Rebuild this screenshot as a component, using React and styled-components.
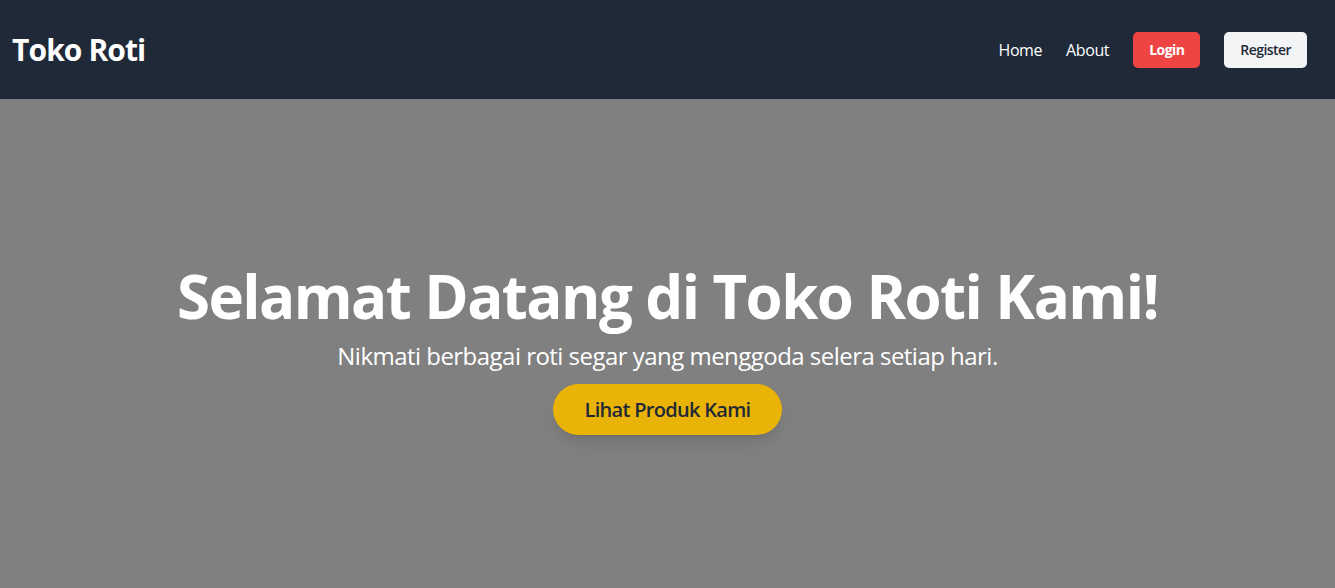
import React from 'react';
import styled, { createGlobalStyle } from 'styled-components';

const GlobalStyle = createGlobalStyle`
  * {
    box-sizing: border-box;
  }

  body {
    margin: 0;
    font-family: 'Open Sans', 'Noto Sans', sans-serif;
    letter-spacing: -0.025em;
    background: #808080;
  }
`;

const Header = styled.header`
  height: 99px;
  display: flex;
  align-items: center;
  justify-content: space-between;
  padding: 0 28px 0 12px;
  background: #1f2937;
`;

const Logo = styled.h1`
  margin: 0;
  font-size: 30px;
  line-height: 36px;
  font-weight: 700;
  letter-spacing: -0.03em;
  color: #fff;
`;

const Nav = styled.nav`
  display: flex;
  align-items: center;
  gap: 24px;
`;

const NavLink = styled.a`
  font-size: 16px;
  line-height: 24px;
  color: #fff;
  text-decoration: none;
  cursor: pointer;
`;

const NavButton = styled.button`
  height: 36px;
  padding: 0 16px;
  border: none;
  border-radius: 5px;
  font-family: inherit;
  font-size: 14px;
  line-height: 20px;
  letter-spacing: -0.04em;
  font-weight: ${(p) => (p.$primary ? 700 : 600)};
  color: ${(p) => (p.$primary ? '#fff' : '#1f2937')};
  background: ${(p) => (p.$primary ? '#ef4444' : '#f3f4f6')};
  cursor: pointer;
`;

const Hero = styled.section`
  min-height: calc(100vh - 99px);
  display: flex;
  flex-direction: column;
  align-items: center;
  padding-top: 167px;
  text-align: center;
  color: #fff;
`;

const Title = styled.h2`
  margin: 0 0 14px;
  font-size: 60px;
  line-height: 60px;
  font-weight: 700;
  letter-spacing: -0.026em;
`;

const Subtitle = styled.p`
  margin: 0 0 12px;
  font-size: 24px;
  line-height: 32px;
  letter-spacing: -0.022em;
`;

const CtaButton = styled.button`
  height: 51px;
  padding: 0 32px;
  border: none;
  border-radius: 9999px;
  font-family: inherit;
  font-size: 20px;
  font-weight: 600;
  letter-spacing: -0.035em;
  color: #1f2937;
  background: #eab308;
  box-shadow: 0 10px 15px -3px rgba(0, 0, 0, 0.1), 0 4px 6px -4px rgba(0, 0, 0, 0.1);
  cursor: pointer;
`;

export default function App() {
  return (
    <>
      <GlobalStyle />
      <Header>
        <Logo>Toko Roti</Logo>
        <Nav>
          <NavLink>Home</NavLink>
          <NavLink>About</NavLink>
          <NavButton $primary>Login</NavButton>
          <NavButton>Register</NavButton>
        </Nav>
      </Header>
      <Hero>
        <Title>Selamat Datang di Toko Roti Kami!</Title>
        <Subtitle>Nikmati berbagai roti segar yang menggoda selera setiap hari.</Subtitle>
        <CtaButton>Lihat Produk Kami</CtaButton>
      </Hero>
    </>
  );
}
